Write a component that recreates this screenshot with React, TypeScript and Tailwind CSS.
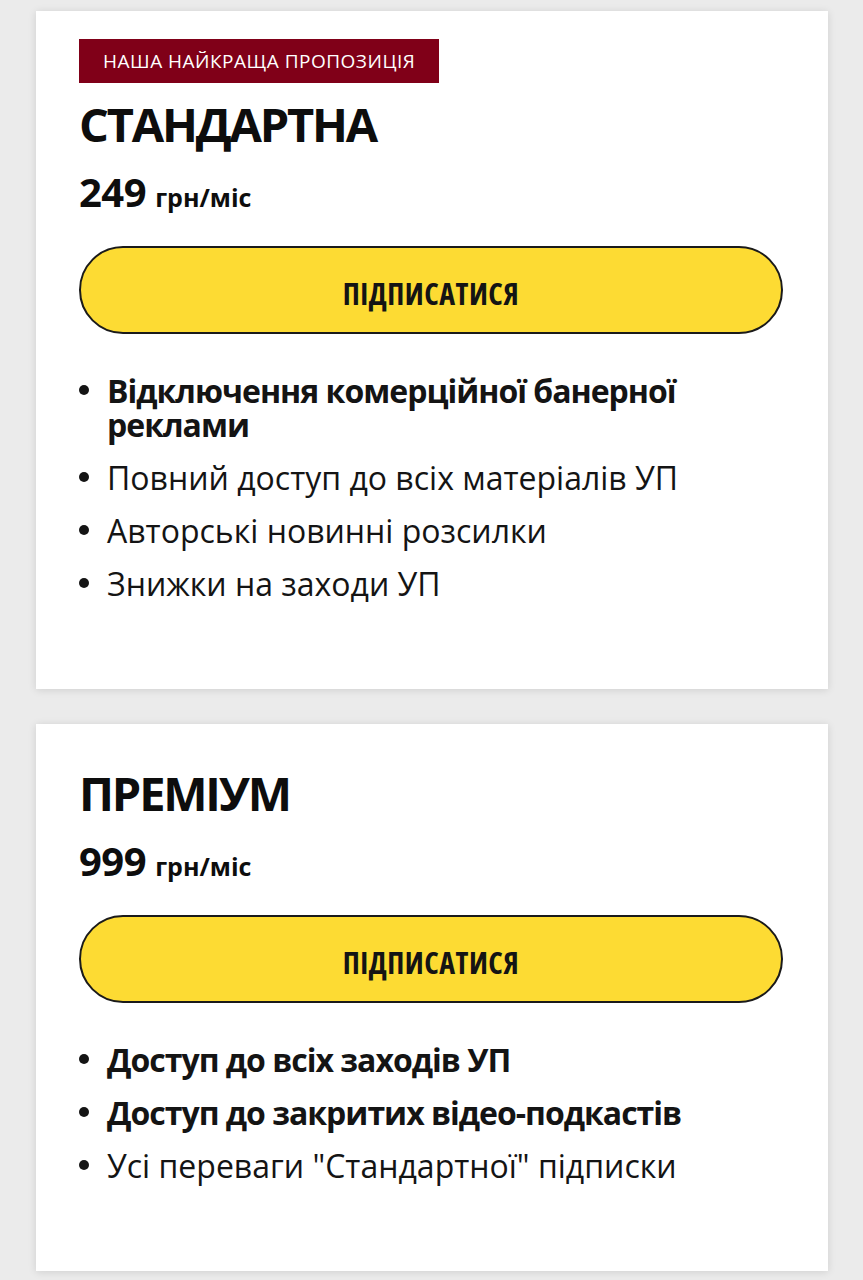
import React from 'react';

type Feature = { text: string; bold?: boolean };

const plans: { name: string; price: string; badge?: string; features: Feature[] }[] = [
  {
    name: 'СТАНДАРТНА',
    price: '249',
    badge: 'Наша найкраща пропозиція',
    features: [
      { text: 'Відключення комерційної банерної реклами', bold: true },
      { text: 'Повний доступ до всіх матеріалів УП' },
      { text: 'Авторські новинні розсилки' },
      { text: 'Знижки на заходи УП' },
    ],
  },
  {
    name: 'ПРЕМІУМ',
    price: '999',
    features: [
      { text: 'Доступ до всіх заходів УП', bold: true },
      { text: 'Доступ до закритих відео-подкастів', bold: true },
      { text: 'Усі переваги "Стандартної" підписки' },
    ],
  },
];

const PlanCard: React.FC<{ plan: (typeof plans)[number] }> = ({ plan }) => {
  return (
    <div className="bg-white shadow-[0_1px_8px_rgba(0,0,0,0.12)] pl-[43px] pr-[45px] pt-[28px] pb-[88px]">
      {plan.badge && (
        <div className="inline-flex items-center h-[44px] px-[24px] bg-[#800018] text-white text-[19px] tracking-[0.5px] uppercase">
          {plan.badge}
        </div>
      )}
      <h2 className="mt-[13px] text-[47px] leading-[56px] font-bold tracking-[-2.2px] text-[#0d0d0d]">{plan.name}</h2>
      <div className="mt-[18px] text-[40px] leading-[44px] font-bold tracking-[-0.5px] text-[#0d0d0d]">
        {plan.price}
        <span className="text-[25px] ml-[9px] tracking-normal">грн/міс</span>
      </div>
      <button
        className="mt-[27px] w-full h-[88px] pt-[7px] rounded-full border-2 border-[#1a1a1a] bg-[#fddb33] text-[30px] tracking-[0.5px] font-bold text-[#141414]"
        style={{ fontStretch: 'condensed' }}
      >
        ПІДПИСАТИСЯ
      </button>
      <ul className="mt-[40px] flex flex-col gap-[19px]">
        {plan.features.map((f, i) => (
          <li key={i} className="flex items-start text-[32px] leading-[34px] text-[#141414]">
            <span className="shrink-0 w-[10px] h-[10px] rounded-full bg-[#141414] mt-[11px] mr-[18px]" />
            <span className={f.bold ? 'font-bold tracking-[-1px]' : 'font-normal'}>{f.text}</span>
          </li>
        ))}
      </ul>
    </div>
  );
};

export default function App() {
  return (
    <div
      className="min-h-[1280px] bg-[#ebebeb] pl-[36px] pr-[35px] pt-[11px] flex flex-col gap-[35px]"
      style={{ fontFamily: '"Open Sans", "Noto Sans", sans-serif' }}
    >
      {plans.map((p) => (
        <PlanCard key={p.name} plan={p} />
      ))}
    </div>
  );
}
